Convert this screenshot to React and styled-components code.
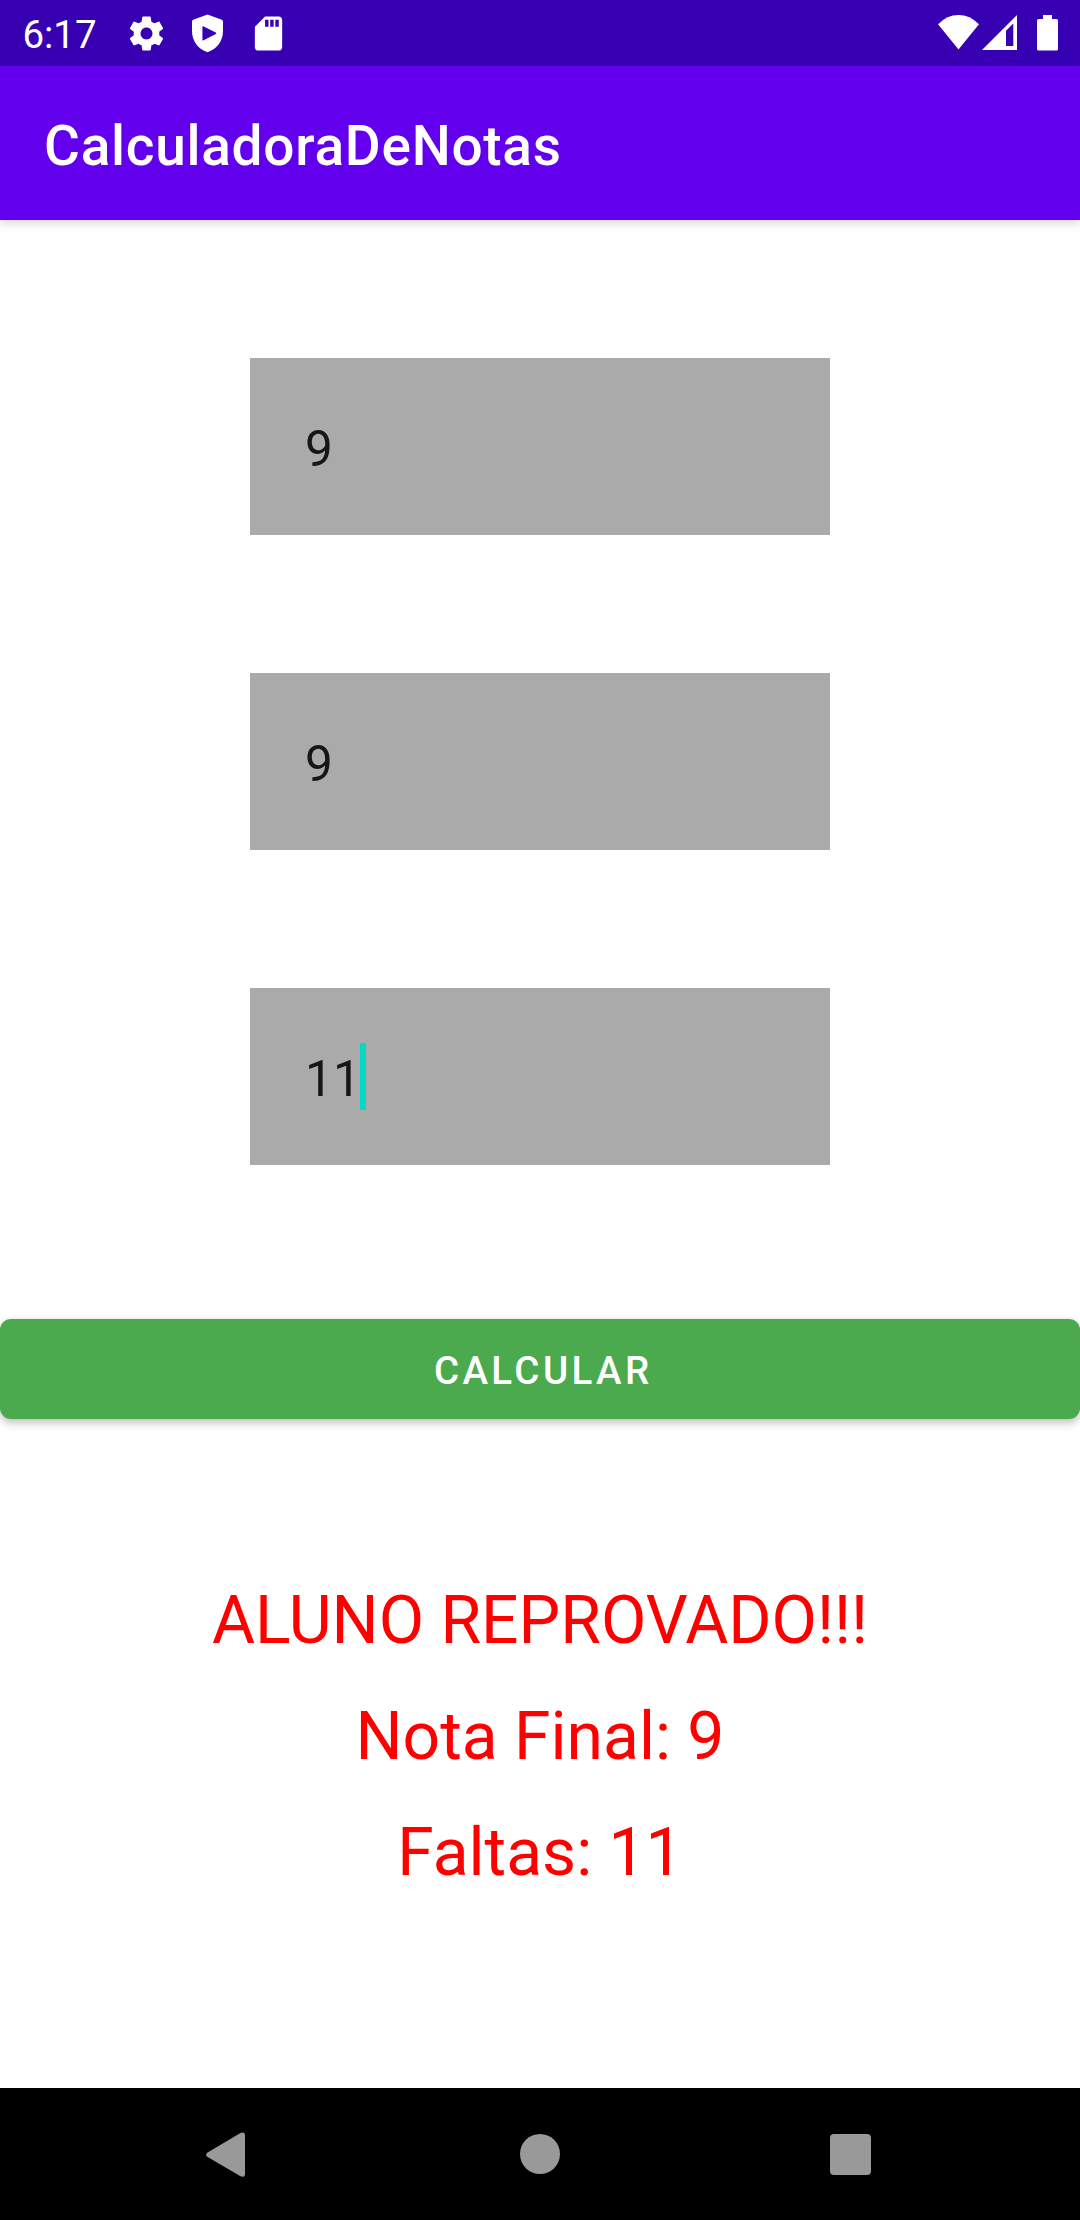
import React from "react";
import styled, { createGlobalStyle } from "styled-components";

const GlobalStyle = createGlobalStyle`
  *, *::before, *::after { box-sizing: border-box; }
  body { margin: 0; background: #fff; }
`;

const Screen = styled.div`
  display: flex;
  flex-direction: column;
  width: 1080px;
  height: 2220px;
  overflow: hidden;
  background: #fff;
  font-family: Roboto, "Liberation Sans", sans-serif;
`;

const StatusBar = styled.header`
  display: flex;
  align-items: center;
  flex: none;
  position: relative;
  z-index: 1;
  height: 66px;
  padding: 0 22px;
  background: #3700b3;
  color: #fff;
`;

const Clock = styled.span`
  width: 104px;
  padding: 3px 0 0 0.4px;
  font-size: 38.5px;
  line-height: 46px;
`;

const IconGroup = styled.div`
  display: flex;
  align-items: center;
  gap: 20px;
`;

const SystemIcons = styled.div`
  display: flex;
  align-items: flex-start;
  height: 36px;
  margin-left: auto;
`;

const Icon = styled.svg`
  display: block;
  flex: none;
  width: ${(p) => p.$w}px;
  height: ${(p) => p.$h}px;
  margin-left: ${(p) => p.$gap || 0}px;
  fill: currentColor;
`;

const AppBar = styled.div`
  display: flex;
  align-items: center;
  flex: none;
  height: 154px;
  padding: 0 44px;
  background: #6200ee;
  box-shadow: 0 2px 10px rgba(0, 0, 0, 0.2);
`;

const Title = styled.h1`
  margin: 0;
  padding-top: 6px;
  color: #fff;
  font-size: 55px;
  font-weight: 500;
  letter-spacing: 0.0132em;
  line-height: 64px;
`;

const Form = styled.main`
  display: flex;
  flex: 1;
  flex-direction: column;
  align-items: center;
  padding-top: 138px;
`;

const Fields = styled.div`
  display: flex;
  flex-direction: column;
  gap: 138px;
`;

const Field = styled.div`
  display: flex;
  align-items: center;
  width: 580px;
  height: 177px;
  padding: 5px 55px 0;
  background: #aaa;
  color: #161616;
  font-size: 49.5px;
  letter-spacing: 0.2px;
  line-height: 58px;
`;

const Value = styled.span`
  position: relative;
`;

const Caret = styled.i`
  position: absolute;
  top: -7px;
  left: 55px;
  width: 6px;
  height: 67px;
  background: #03dac5;
`;

const Submit = styled.button`
  align-self: stretch;
  height: 100px;
  margin-top: 154px;
  padding: 2px 0 0 6.5px;
  border: 0;
  border-radius: 11px;
  background: #4caa4e;
  box-shadow: 0 4px 8px rgba(0, 0, 0, 0.24), 0 0 3px rgba(0, 0, 0, 0.06);
  color: #fff;
  font-family: inherit;
  font-size: 38.5px;
  font-weight: 500;
  letter-spacing: 0.0885em;
`;

const Result = styled.div`
  margin-top: 144px;
  color: #f00;
  font-size: 66px;
  line-height: 116px;
  text-align: center;
`;

const Line = styled.p`
  margin: 0;
`;

const NavBar = styled.nav`
  display: flex;
  align-items: center;
  flex: none;
  height: 132px;
  padding: 0 209px 0 206px;
  justify-content: space-between;
  background: #000;
  color: #999;
`;

const fields = [{ value: "9" }, { value: "9" }, { value: "11", focused: true }];
const result = ["ALUNO REPROVADO!!!", "Nota Final: 9", "Faltas: 11"];

export default function App() {
  return (
    <Screen>
      <GlobalStyle />
      <StatusBar>
        <Clock>6:17</Clock>
        <IconGroup>
          <Icon $w={41} $h={41} viewBox="0 0 24 24">
            <path d="M19.43 12.98c.04-.32.07-.64.07-.98s-.03-.66-.07-.98l2.11-1.65c.19-.15.24-.42.12-.64l-2-3.46c-.12-.22-.39-.3-.61-.22l-2.49 1c-.52-.4-1.08-.73-1.69-.98l-.38-2.65C14.46 2.18 14.25 2 14 2h-4c-.25 0-.46.18-.49.42l-.38 2.65c-.61.25-1.17.59-1.69.98l-2.49-1c-.23-.09-.49 0-.61.22l-2 3.46c-.13.22-.07.49.12.64l2.11 1.65c-.04.32-.07.65-.07.98s.03.66.07.98l-2.11 1.65c-.19.15-.24.42-.12.64l2 3.46c.12.22.39.3.61.22l2.49-1c.52.4 1.08.73 1.69.98l.38 2.65c.03.24.24.42.49.42h4c.25 0 .46-.18.49-.42l.38-2.65c.61-.25 1.17-.59 1.69-.98l2.49 1c.23.09.49 0 .61-.22l2-3.46c.12-.22.07-.49-.12-.64l-2.11-1.65zM12 15.5c-1.93 0-3.5-1.57-3.5-3.5s1.57-3.5 3.5-3.5 3.5 1.57 3.5 3.5-1.57 3.5-3.5 3.5z" />
          </Icon>
          <Icon $w={41} $h={41} viewBox="0 0 41 41">
            <path
              fillRule="evenodd"
              d="M20.5 1.5 6.2 6.8Q5 7.3 5 8.6V18C5 28 11 36 20.5 39.2C30 36 36 28 36 18V8.6Q36 7.3 34.8 6.8ZM15.4 14.2Q15.4 12.8 16.7 13.5L28.8 19.6Q30 20.3 28.8 21L16.7 27.2Q15.4 27.9 15.4 26.5Z"
            />
          </Icon>
          <Icon $w={41} $h={41} viewBox="0 0 24 24">
            <path d="M18 2h-8L4.02 8 4 20c0 1.1.9 2 2 2h12c1.1 0 2-.9 2-2V4c0-1.1-.9-2-2-2zm-6 6h-2V4h2v4zm3 0h-2V4h2v4zm3 0h-2V4h2v4z" />
          </Icon>
        </IconGroup>
        <SystemIcons>
          <Icon $w={41} $h={35} viewBox="0 0 41 35">
            <path d="M0 9.3Q9 0 20.5 0T41 9.3L20.5 34.5Z" />
          </Icon>
          <Icon $w={35} $h={35} $gap={3} viewBox="0 0 35 35">
            <path fillRule="evenodd" d="M0 35 35 0V35ZM24 15.8V31H31.3V8.5Z" />
          </Icon>
          <Icon $w={21} $h={36} $gap={20} viewBox="0 0 21 36">
            <path d="M6 0H15V4H19.5Q21 4 21 5.5V34Q21 35.6 19.5 35.6H1.5Q0 35.6 0 34V5.5Q0 4 1.5 4H6Z" />
          </Icon>
        </SystemIcons>
      </StatusBar>
      <AppBar>
        <Title>CalculadoraDeNotas</Title>
      </AppBar>
      <Form>
        <Fields>
          {fields.map((field, i) => (
            <Field key={i}>
              <Value>
                {field.value}
                {field.focused && <Caret />}
              </Value>
            </Field>
          ))}
        </Fields>
        <Submit>CALCULAR</Submit>
        <Result>
          {result.map((text) => (
            <Line key={text}>{text}</Line>
          ))}
        </Result>
      </Form>
      <NavBar>
        <Icon $w={39} $h={45} viewBox="0 0 39 45">
          <path d="M1.2 20.7 34.5 1.1Q39-.6 39 3.7V41.7Q39 46 34.5 44.3L1.2 24.7Q-1 22.7 1.2 20.7Z" />
        </Icon>
        <Icon $w={40} $h={40} $gap={5} viewBox="0 0 40 40">
          <circle cx="20" cy="20" r="20" />
        </Icon>
        <Icon $w={41} $h={41} viewBox="0 0 41 41">
          <rect width="41" height="41" rx="4" />
        </Icon>
      </NavBar>
    </Screen>
  );
}
